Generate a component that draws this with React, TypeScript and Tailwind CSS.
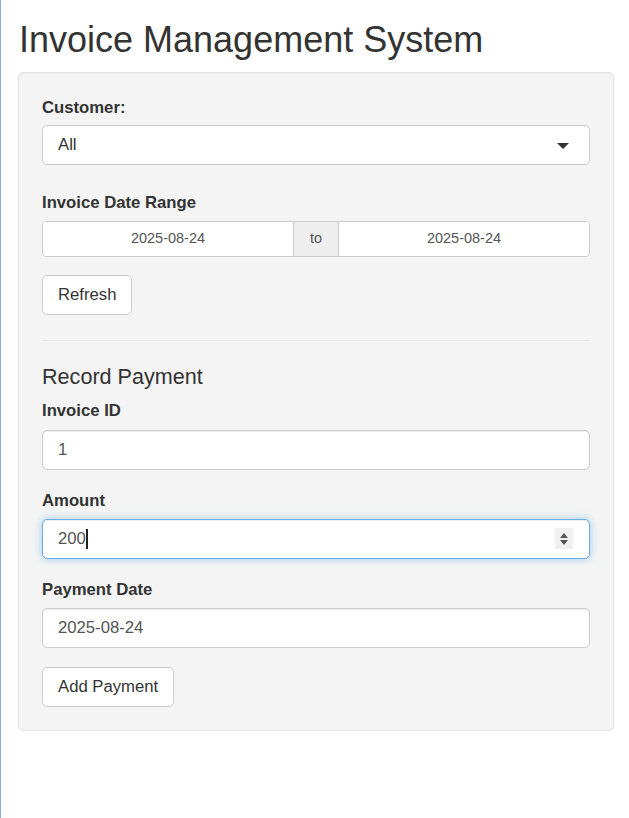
import { useState } from 'react';

export default function App() {
  const [amount, setAmount] = useState('200');

  return (
    <div
      className="min-h-screen bg-white border-l border-[#8aaae4] text-[#333]"
      style={{ fontFamily: '"Liberation Sans", Arial, sans-serif' }}
    >
      <div className="pl-[17px] pr-[15px]">
        <h1 className="text-[36px] leading-[40px] pt-[20px] pb-[12px] pl-[1px] text-[#333]">Invoice Management System</h1>

        <div className="bg-[#f4f4f4] border border-[#e3e3e3] rounded-[5px] shadow-[inset_0_1px_1px_rgba(0,0,0,0.05)] px-[23px] pt-[25px] pb-[23px]">
          <label className="block text-[16.7px] font-bold leading-[20px] mb-[7px]">Customer:</label>
          <div className="relative h-[40px] bg-white border border-[#ccc] rounded-[5px] flex items-center pl-[15px]">
            <span className="text-[16.7px] text-[#333]">All</span>
            <span className="absolute right-[20px] top-[17px] w-0 h-0 border-l-[6px] border-r-[6px] border-t-[6px] border-l-transparent border-r-transparent border-t-[#333]" />
          </div>

          <label className="block text-[16.7px] font-bold leading-[20px] mt-[28px] mb-[8px]">Invoice Date Range</label>
          <div className="flex h-[36px] border border-[#ccc] rounded-[4px] overflow-hidden text-[14.5px] text-[#555]">
            <div className="flex-1 bg-white flex items-center justify-center">2025-08-24</div>
            <div className="w-[46px] bg-[#eee] border-l border-r border-[#ccc] flex items-center justify-center">to</div>
            <div className="flex-1 bg-white flex items-center justify-center">2025-08-24</div>
          </div>

          <button className="mt-[18px] h-[40px] px-[15px] bg-white border border-[#ccc] rounded-[5px] text-[16.7px] text-[#333]">
            Refresh
          </button>

          <hr className="mt-[25px] mb-[23px] border-t border-[#e9e9e9]" />

          <h4 className="text-[21.6px] leading-[26px] text-[#333]">Record Payment</h4>

          <label className="block text-[16.7px] font-bold leading-[20px] mt-[11px] mb-[9px]">Invoice ID</label>
          <div className="h-[40px] bg-white border border-[#ccc] rounded-[5px] flex items-center pl-[15px] text-[16.7px] text-[#555] shadow-[inset_0_1px_1px_rgba(0,0,0,0.075)]">
            1
          </div>

          <label className="block text-[16.7px] font-bold leading-[20px] mt-[21px] mb-[8px]">Amount</label>
          <div className="relative h-[40px] bg-white border border-[#66afe9] rounded-[5px] flex items-center pl-[15px] text-[16.7px] text-[#555] shadow-[inset_0_1px_1px_rgba(0,0,0,0.075),0_0_8px_rgba(102,175,233,0.6)]">
            <input
              value={amount}
              onChange={(e) => setAmount(e.target.value)}
              className="w-[30px] outline-none bg-transparent"
            />
            <span className="w-[1.5px] h-[20px] bg-[#222] -ml-[2px]" />
            <div className="absolute right-[16px] top-[8px] w-[18px] h-[21px] bg-[#f0f0f0] flex flex-col items-center justify-center gap-[2px]">
              <span className="w-0 h-0 border-l-[4px] border-r-[4px] border-b-[5px] border-l-transparent border-r-transparent border-b-[#555]" />
              <span className="w-0 h-0 border-l-[4px] border-r-[4px] border-t-[5px] border-l-transparent border-r-transparent border-t-[#555]" />
            </div>
          </div>

          <label className="block text-[16.7px] font-bold leading-[20px] mt-[21px] mb-[8px]">Payment Date</label>
          <div className="h-[40px] bg-white border border-[#ccc] rounded-[5px] flex items-center pl-[15px] text-[16.7px] text-[#555] shadow-[inset_0_1px_1px_rgba(0,0,0,0.075)]">
            2025-08-24
          </div>

          <button className="mt-[19px] h-[40px] px-[15px] bg-white border border-[#ccc] rounded-[5px] text-[16.7px] text-[#333]">
            Add Payment
          </button>
        </div>
      </div>
    </div>
  );
}
